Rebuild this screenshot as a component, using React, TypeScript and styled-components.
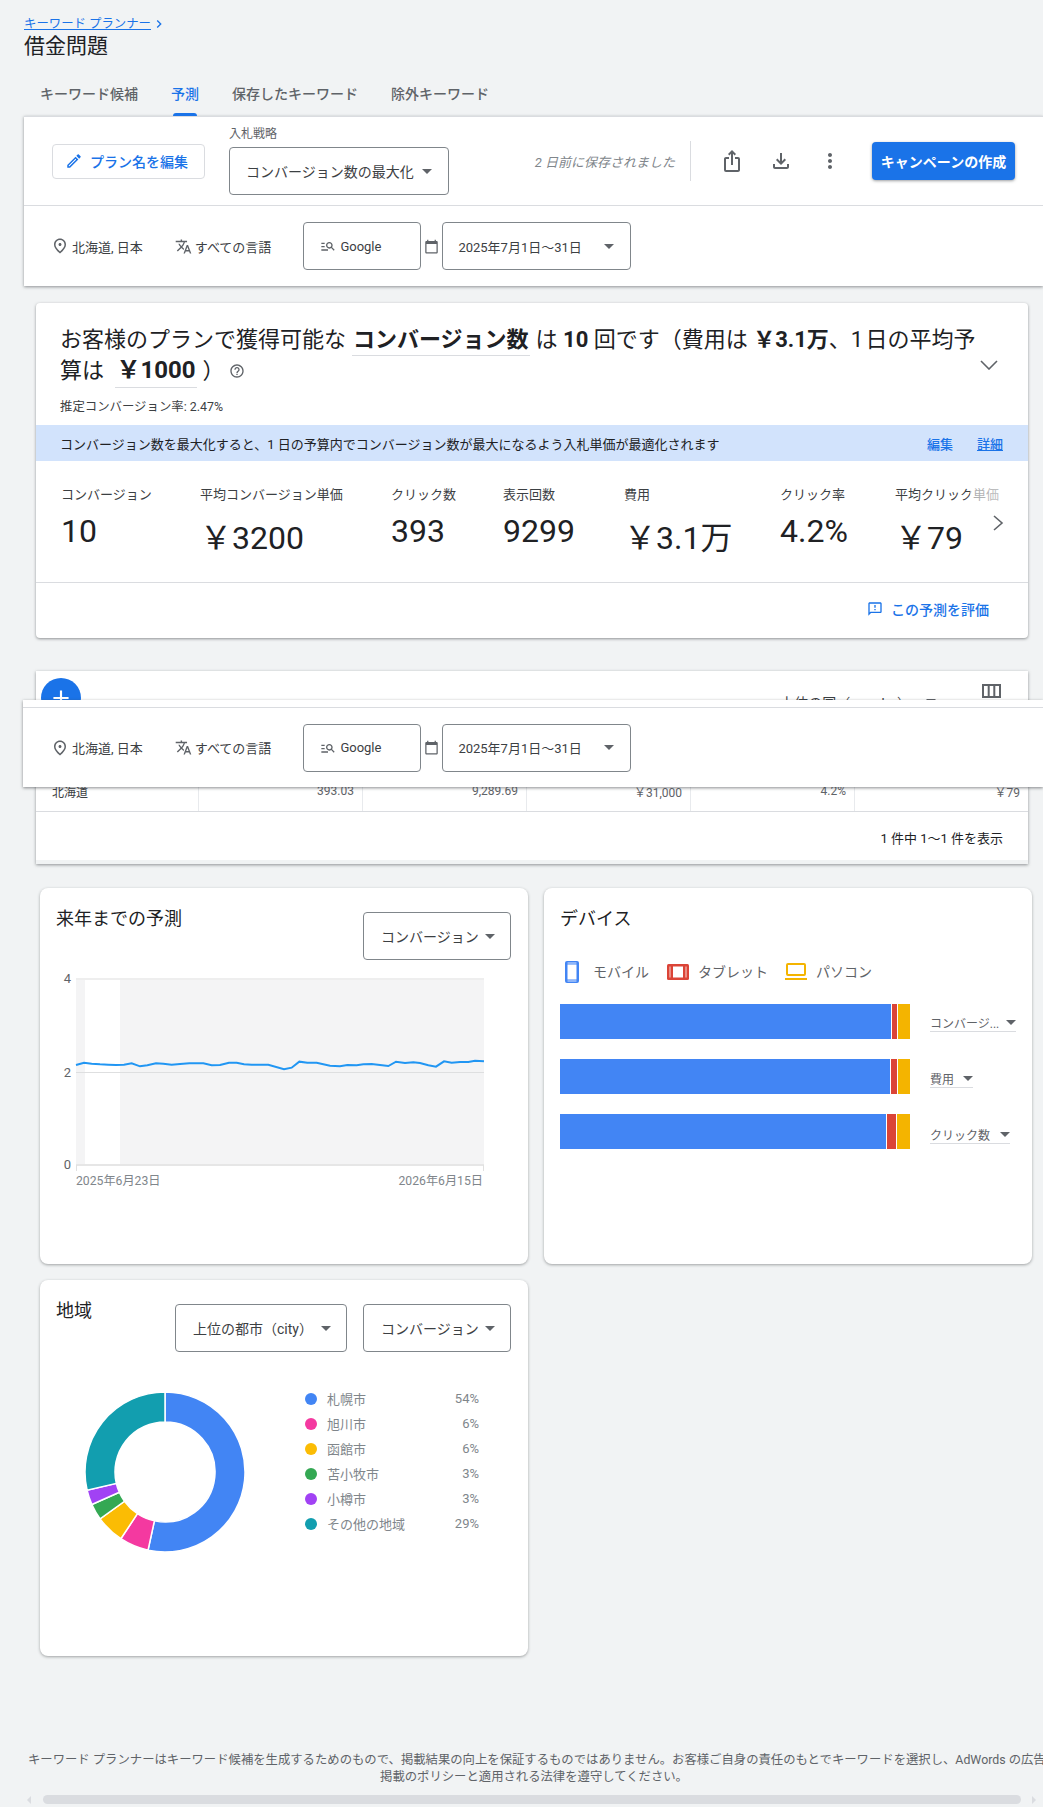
import * as React from 'react';
import styled, { createGlobalStyle } from 'styled-components';
import {
  MdAdd,
  MdCalendarToday,
  MdChevronRight,
  MdHelpOutline,
  MdIosShare,
  MdManageSearch,
  MdMoreVert,
  MdOutlineEdit,
  MdOutlineFeedback,
  MdOutlineFileDownload,
  MdOutlinePlace,
  MdTranslate,
} from 'react-icons/md';

const GlobalStyle = createGlobalStyle`
  html, body {
    margin: 0;
    padding: 0;
    background: #f1f3f4;
    overflow: hidden;
  }
  body, button {
    font-family: Roboto, 'Noto Sans CJK JP', sans-serif;
    color: #202124;
  }
`;

const Page = styled.div`
  position: relative;
  width: 1043px;
  height: 1807px;
  overflow: hidden;
  padding: 17px 0 0 24px;
  box-sizing: border-box;
  background: #f1f3f4;
`;

const Breadcrumb = styled.a`
  display: flex;
  align-items: center;
  width: fit-content;
  height: 14px;
  font-size: 12.4px;
  line-height: 14px;
  color: #1a73e8;
  span {
    text-decoration: underline;
  }
`;
const Title = styled.h1`
  margin: 1px 0 7px;
  font-size: 21px;
  font-weight: 400;
  line-height: 28px;
`;

const Tabs = styled.div`
  display: flex;
  height: 49px;
`;
const Tab = styled.div<{ $active?: boolean }>`
  position: relative;
  padding: 19px 16px 0;
  margin-right: 1px;
  font-size: 14px;
  line-height: 17px;
  font-weight: 500;
  color: ${(p) => (p.$active ? '#1a73e8' : '#5f6368')};
  ${(p) =>
    p.$active &&
    `&::after {
      content: '';
      position: absolute;
      left: 18px;
      right: 18px;
      bottom: 0;
      height: 3px;
      border-radius: 3px 3px 0 0;
      background: #1a73e8;
    }`}
`;

const Panel = styled.section`
  width: 1019px;
  background: #fff;
  border-top: 1px solid #dadce0;
  box-shadow: 0 1px 3px rgba(60, 64, 67, 0.55);
`;
const PlanRow = styled.div`
  display: flex;
  align-items: center;
  height: 88px;
  padding: 0 28px 0 28px;
  border-bottom: 1px solid #dadce0;
`;
const EditButton = styled.button`
  display: flex;
  align-items: center;
  gap: 7px;
  width: 153px;
  height: 35px;
  margin-right: 24px;
  padding: 0 0 0 12px;
  background: #fff;
  border: 1px solid #dadce0;
  border-radius: 4px;
  font-size: 14px;
  font-weight: 500;
  color: #1a73e8;
`;
const FieldGroup = styled.div`
  display: flex;
  flex-direction: column;
`;
const FieldLabel = styled.label`
  height: 20px;
  font-size: 12px;
  line-height: 14px;
  color: #5f6368;
`;
const Select = styled.div<{ $width: number; $pad?: number; $caretGap?: number }>`
  display: flex;
  align-items: center;
  justify-content: space-between;
  flex: none;
  width: ${(p) => p.$width}px;
  height: 48px;
  padding: 0 ${(p) => p.$caretGap ?? 16}px 0 ${(p) => p.$pad ?? 16}px;
  box-sizing: border-box;
  border: 1px solid #80868b;
  border-radius: 4px;
  background: #fff;
  font-size: 14px;
  color: #3c4043;
  white-space: nowrap;
`;
const Caret = styled.i`
  display: block;
  flex: none;
  width: 0;
  height: 0;
  border-left: 5px solid transparent;
  border-right: 5px solid transparent;
  border-top: 5px solid #5f6368;
`;
const SavedNote = styled.span`
  margin-left: auto;
  font-size: 13px;
  font-style: italic;
  color: #80868b;
`;
const Divider = styled.div`
  width: 1px;
  height: 40px;
  margin: 0 16px 0 15px;
  background: #dadce0;
`;
const IconButton = styled.div`
  display: flex;
  align-items: center;
  justify-content: center;
  width: 49px;
  height: 40px;
  color: #5f6368;
`;
const PrimaryButton = styled.button`
  width: 143px;
  height: 38px;
  margin-left: 18px;
  padding: 0;
  border: 0;
  border-radius: 4px;
  background: #1a73e8;
  color: #fff;
  font-size: 14px;
  font-weight: 700;
  box-shadow: 0 1px 3px rgba(60, 64, 67, 0.5);
`;

const FilterRow = styled.div`
  display: flex;
  align-items: center;
  height: 80px;
  padding-left: 27px;
  box-sizing: border-box;
  background: #fff;
`;
const FilterItem = styled.div<{ $gap: number }>`
  display: flex;
  align-items: center;
  gap: 3px;
  margin-right: ${(p) => p.$gap}px;
  font-size: 13px;
  color: #3c4043;
  svg {
    color: #5f6368;
  }
`;
const NetworkBox = styled(Select)`
  justify-content: flex-start;
  gap: 4px;
  font-size: 13px;
  svg {
    color: #5f6368;
  }
`;
const DateText = styled.span`
  font-size: 13px;
`;
const CalendarSlot = styled.div`
  display: flex;
  justify-content: center;
  width: 21px;
  color: #5f6368;
`;
const FloatingFilter = styled.div`
  position: absolute;
  top: 29px;
  left: -13px;
  width: 1020px;
  padding-top: 7px;
  background: #fff;
  box-shadow: 0 1px 3px rgba(60, 64, 67, 0.6);
  ${FilterRow} {
    padding-left: 28px;
    border-top: 1px solid #dadce0;
  }
`;

const Summary = styled.section`
  position: relative;
  width: 992px;
  margin: 17px 0 0 12px;
  background: #fff;
  border-radius: 4px;
  box-shadow: 0 1px 3px rgba(60, 64, 67, 0.55);
`;
const Headline = styled.h2`
  width: 930px;
  height: 62px;
  margin: 0;
  padding: 21px 0 0 24px;
  box-sizing: content-box;
  font-size: 22px;
  line-height: 31px;
  font-weight: 400;
`;
const Emphasis = styled.b<{ $large?: boolean }>`
  padding: 0 1px 3px;
  margin: 0 6px;
  border-bottom: 1px solid #dadce0;
  font-size: ${(p) => (p.$large ? 24 : 22)}px;
  font-weight: 700;
`;
const Strong = styled.b`
  font-weight: 700;
`;
const HelpIcon = styled(MdHelpOutline)`
  margin-left: 4px;
  font-size: 16px;
  color: #5f6368;
  vertical-align: -1px;
`;
const CollapseIcon = styled.svg`
  position: absolute;
  top: 57px;
  right: 30px;
  fill: none;
  stroke: #5f6368;
  stroke-width: 1.6;
`;
const RateNote = styled.p`
  margin: 0;
  padding: 12px 0 10px 24px;
  font-size: 12.4px;
  line-height: 17px;
  color: #3c4043;
`;
const InfoBand = styled.div`
  display: flex;
  align-items: center;
  height: 36px;
  padding: 0 25px 0 24px;
  background: #d2e3fc;
  font-size: 13px;
  color: #202124;
`;
const InfoText = styled.span`
  flex: 1;
`;
const InfoLink = styled.a<{ $underline?: boolean }>`
  margin-left: 24px;
  font-weight: 500;
  color: #1a73e8;
  text-decoration: ${(p) => (p.$underline ? 'underline' : 'none')};
`;
const Metrics = styled.div`
  position: relative;
  display: grid;
  grid-template-columns: 139px 191px 112px 121px 156px 115px 1fr;
  height: 122px;
  padding: 26px 0 0 25px;
  box-sizing: border-box;
  overflow: hidden;
  border-bottom: 1px solid #dadce0;
  white-space: nowrap;
`;
const Metric = styled.div`
  font-size: 13px;
  line-height: 16px;
  color: #3c4043;
`;
const MetricValue = styled.div<{ $money?: boolean }>`
  margin-top: ${(p) => (p.$money ? 16 : 9)}px;
  font-size: 32px;
  line-height: 38px;
  color: #202124;
`;
const MetricFade = styled.div`
  position: absolute;
  top: 0;
  right: 0;
  bottom: 0;
  width: 58px;
  background: linear-gradient(to right, rgba(255, 255, 255, 0.55), rgba(255, 255, 255, 0.8));
`;
const MetricNext = styled.svg`
  position: absolute;
  top: 54px;
  right: 24px;
  fill: none;
  stroke: #5f6368;
  stroke-width: 1.6;
`;
const RateLink = styled.a`
  display: flex;
  align-items: center;
  justify-content: flex-end;
  gap: 8px;
  height: 55px;
  padding: 0 39px 3px 0;
  box-sizing: border-box;
  font-size: 14px;
  font-weight: 500;
  color: #1a73e8;
`;

const TableWrap = styled.section`
  position: relative;
  width: 992px;
  margin: 33px 0 0 12px;
  background: #fff;
  box-shadow: 0 1px 3px rgba(60, 64, 67, 0.55);
`;
const TableTools = styled.div`
  display: flex;
  height: 100px;
  padding: 7px 27px 0 5px;
  box-sizing: border-box;
`;
const Fab = styled.div`
  display: flex;
  align-items: center;
  justify-content: center;
  width: 40px;
  height: 40px;
  border-radius: 50%;
  background: #1a73e8;
  color: #fff;
  font-size: 26px;
`;
const TopCountry = styled.div`
  display: flex;
  align-items: center;
  gap: 15px;
  height: 17px;
  margin: 15px 46px 0 auto;
  font-size: 14px;
  color: #3c4043;
`;
const ColumnsIcon = styled.svg`
  margin-top: 6px;
  fill: none;
  stroke: #5f6368;
  stroke-width: 2;
`;
const TableRow = styled.div`
  display: grid;
  grid-template-columns: 163px repeat(4, 164px) 1fr;
  height: 40px;
  border-bottom: 1px solid #dadce0;
`;
const Cell = styled.div<{ $name?: boolean }>`
  display: flex;
  align-items: center;
  justify-content: ${(p) => (p.$name ? 'flex-start' : 'flex-end')};
  padding: 0 ${(p) => (p.$name ? 0 : 8)}px 0 ${(p) => (p.$name ? 16 : 0)}px;
  font-size: 12px;
  color: ${(p) => (p.$name ? '#3c4043' : '#5f6368')};
  border-right: 1px solid #e8eaed;
  &:last-child {
    border-right: 0;
  }
`;
const TableFooter = styled.div`
  height: 48px;
  padding: 18px 25px 0 0;
  box-sizing: border-box;
  font-size: 13px;
  line-height: 17px;
  text-align: right;
  color: #202124;
`;
const TableEnd = styled.div`
  height: 4px;
  background: #f1f3f4;
`;

const CardGrid = styled.div`
  display: grid;
  grid-template-columns: 488px 488px;
  grid-auto-rows: 376px;
  gap: 16px;
  margin: 24px 0 0 16px;
`;
const Card = styled.section`
  padding: 18px 17px 0 16px;
  box-sizing: border-box;
  background: #fff;
  border-radius: 8px;
  box-shadow: 0 1px 3px rgba(60, 64, 67, 0.45);
`;
const CardHead = styled.div`
  display: flex;
  align-items: flex-start;
  gap: 16px;
  height: 64px;
`;
const CardTitle = styled.h3`
  flex: 1;
  margin: 0;
  font-size: 18px;
  line-height: 26px;
  font-weight: 400;
`;
const CardSelect = styled(Select)`
  margin-top: 6px;
`;

const ChartSvg = styled.svg`
  display: block;
  text {
    font-family: Roboto, 'Noto Sans CJK JP', sans-serif;
    font-size: 12.2px;
  }
  .axis {
    font-size: 13px;
    fill: #5f6368;
  }
  .date {
    fill: #80868b;
  }
`;

const DeviceLegend = styled.div`
  display: flex;
  align-items: center;
  height: 20px;
  margin-top: -9px;
  font-size: 14px;
  color: #5f6368;
`;
const LegendEntry = styled.div<{ $gap: number }>`
  display: flex;
  align-items: center;
  margin-right: ${(p) => p.$gap}px;
`;
const LegendIcon = styled.span<{ $left: number; $right: number }>`
  display: flex;
  margin: 1px ${(p) => p.$right}px 0 ${(p) => p.$left}px;
`;
const DeviceRows = styled.div`
  display: flex;
  flex-direction: column;
  gap: 20px;
  margin-top: 23px;
`;
const DeviceRow = styled.div`
  display: flex;
  align-items: flex-end;
  height: 35px;
`;
const Bar = styled.div`
  display: flex;
  gap: 1px;
  flex: none;
  width: 350px;
  height: 35px;
`;
const BarPart = styled.div<{ $color: string }>`
  background: ${(p) => p.$color};
`;
const RowSelect = styled.div<{ $width: number; $lift: number }>`
  display: flex;
  align-items: center;
  justify-content: space-between;
  gap: 7px;
  width: ${(p) => p.$width}px;
  height: 18px;
  margin: 0 0 ${(p) => p.$lift}px 20px;
  border-bottom: 1px solid #dadce0;
  font-size: 12px;
  color: #5f6368;
  white-space: nowrap;
`;
const GeoBody = styled.div`
  display: flex;
  align-items: flex-start;
  margin-top: 30px;
`;
const DonutSvg = styled.svg`
  flex: none;
  margin-left: 29px;
`;
const GeoLegend = styled.ul`
  flex: none;
  width: 174px;
  margin: -6px 0 0 60px;
  padding: 0;
  list-style: none;
`;
const GeoItem = styled.li`
  display: flex;
  align-items: center;
  height: 25px;
  font-size: 13px;
  color: #80868b;
`;
const GeoDot = styled.i<{ $color: string }>`
  flex: none;
  width: 12px;
  height: 12px;
  margin-right: 10px;
  border-radius: 50%;
  background: ${(p) => p.$color};
`;
const GeoShare = styled.span`
  margin-left: auto;
`;

const Disclaimer = styled.p`
  position: absolute;
  left: 28px;
  top: 1752px;
  width: 1012px;
  margin: 0;
  font-size: 12.35px;
  line-height: 17px;
  text-align: center;
  white-space: nowrap;
  color: #5f6368;
`;
const ScrollTrack = styled.div`
  position: absolute;
  left: 27px;
  right: 7px;
  bottom: 3px;
  display: flex;
  align-items: center;
  justify-content: space-between;
  height: 9px;
`;
const ScrollThumb = styled.div`
  width: 978px;
  height: 9px;
  border-radius: 5px;
  background: #dadce0;
`;
const ScrollArrow = styled.i<{ $right?: boolean }>`
  width: 0;
  height: 0;
  border-top: 4px solid transparent;
  border-bottom: 4px solid transparent;
  ${(p) => (p.$right ? 'border-left: 4px solid #dadce0;' : 'border-right: 4px solid #dadce0;')}
`;

const BLUE = '#4285f4';
const RED = '#db4437';
const YELLOW = '#f4b400';

const FilterContent: React.FC = () => (
  <FilterRow>
    <FilterItem $gap={32}>
      <MdOutlinePlace size={18} />
      北海道, 日本
    </FilterItem>
    <FilterItem $gap={32}>
      <MdTranslate size={17} />
      すべての言語
    </FilterItem>
    <NetworkBox $width={118} $pad={16}>
      <MdManageSearch size={16} />
      Google
    </NetworkBox>
    <CalendarSlot>
      <MdCalendarToday size={15} />
    </CalendarSlot>
    <Select $width={189} $pad={15} $caretGap={16}>
      <DateText>2025年7月1日～31日</DateText>
      <Caret />
    </Select>
  </FilterRow>
);

const metrics = [
  { label: 'コンバージョン', value: '10' },
  { label: '平均コンバージョン単価', value: '￥3200', money: true },
  { label: 'クリック数', value: '393' },
  { label: '表示回数', value: '9299' },
  { label: '費用', value: '￥3.1万', money: true },
  { label: 'クリック率', value: '4.2%' },
  { label: '平均クリック単価', value: '￥79', money: true },
];

const tableCells = ['393.03', '9,289.69', '￥31,000', '4.2%', '￥79'];

const linePoints = [
  [138, 555], [162, 548], [185, 551], [210, 553], [235, 554], [258, 555], [282, 554], [305, 550],
  [330, 559], [352, 556], [378, 550], [400, 551], [425, 554], [450, 552], [478, 550], [520, 550],
  [545, 556], [570, 555], [597, 548], [620, 548], [642, 553], [665, 554], [715, 554], [762, 568],
  [785, 563], [808, 545], [832, 548], [860, 548], [900, 557], [930, 559], [952, 555], [980, 556],
  [1000, 553], [1025, 552], [1050, 555], [1075, 558], [1098, 545], [1125, 549], [1150, 547], [1170, 549],
  [1195, 556], [1218, 560], [1242, 544], [1265, 548], [1290, 546], [1315, 546], [1335, 542], [1362, 544],
];

const ForecastChart: React.FC = () => (
  <ChartSvg width="450" height="230" viewBox="0 0 450 230">
    <rect x="20" y="9" width="408" height="186" fill="#f4f4f5" />
    <rect x="29" y="9" width="35" height="186" fill="#fff" />
    <rect x="20" y="8" width="408" height="2" fill="#eeeeee" />
    <rect x="20" y="102" width="408" height="1" fill="#dedfe0" />
    <rect x="20" y="194" width="408" height="2" fill="#e6e6e6" />
    <rect x="20" y="195" width="1" height="6" fill="#e0e0e0" />
    <rect x="427" y="195" width="1" height="6" fill="#e0e0e0" />
    <polyline
      fill="none"
      stroke="#2196f3"
      strokeWidth="2"
      points={linePoints.map(([x, y]) => `${x / 3 - 26},${y / 3 - 90}`).join(' ')}
    />
    <text className="axis" x="15" y="13" textAnchor="end">4</text>
    <text className="axis" x="15" y="107" textAnchor="end">2</text>
    <text className="axis" x="15" y="199" textAnchor="end">0</text>
    <text className="date" x="20" y="215">2025年6月23日</text>
    <text className="date" x="427" y="215" textAnchor="end">2026年6月15日</text>
  </ChartSvg>
);

const PhoneIcon = () => (
  <svg width="14" height="22" viewBox="0 0 14 22">
    <rect width="14" height="22" rx="2" fill={BLUE} />
    <rect x="2.5" y="3.5" width="9" height="15" fill="#fff" />
    <rect x="2.5" y="1.5" width="9" height="1" fill="#dbe7fd" />
    <rect x="2.5" y="19.5" width="9" height="1" fill="#dbe7fd" />
  </svg>
);
const TabletIcon = () => (
  <svg width="22" height="16" viewBox="0 0 22 16">
    <rect width="22" height="16" rx="1.5" fill={RED} />
    <rect x="6" y="2.5" width="10" height="11" fill="#fff" />
    <rect x="2.5" y="2.5" width="1" height="11" fill="#f8d8d4" />
    <rect x="18.5" y="2.5" width="1" height="11" fill="#f8d8d4" />
  </svg>
);
const LaptopIcon = () => (
  <svg width="22" height="17" viewBox="0 0 22 17">
    <rect x="2" y="1" width="18" height="11" rx="1" fill="none" stroke={YELLOW} strokeWidth="2" />
    <rect x="0" y="15" width="22" height="2" fill={YELLOW} />
  </svg>
);

const deviceRows = [
  { name: 'コンバージ...', width: 90, lift: 7, parts: [331, 5, 12] },
  { name: '費用', width: 43, lift: 6, parts: [330, 6, 12] },
  { name: 'クリック数', width: 80, lift: 5, parts: [326, 9, 13] },
];
const partColors = [BLUE, RED, YELLOW];

// arc is the drawn size of the slice, share the rounded figure in the legend
const geo = [
  { name: '札幌市', share: 54, arc: 53.4, color: '#4285f4' },
  { name: '旭川市', share: 6, arc: 5.9, color: '#f439a0' },
  { name: '函館市', share: 6, arc: 5.75, color: '#fbbc04' },
  { name: '苫小牧市', share: 3, arc: 3.3, color: '#34a853' },
  { name: '小樽市', share: 3, arc: 3, color: '#a142f4' },
  { name: 'その他の地域', share: 29, arc: 28.65, color: '#129eaf' },
];

// donut slices, clockwise from 12 o'clock
const slicePath = (from: number, to: number) => {
  const pt = (pct: number, r: number) => {
    const a = (pct / 100) * 2 * Math.PI;
    return `${(80 + r * Math.sin(a)).toFixed(2)} ${(80 - r * Math.cos(a)).toFixed(2)}`;
  };
  const large = to - from > 50 ? 1 : 0;
  return `M${pt(from, 80)}A80 80 0 ${large} 1 ${pt(to, 80)}L${pt(to, 50)}A50 50 0 ${large} 0 ${pt(from, 50)}Z`;
};

const GeoDonut: React.FC = () => {
  let start = 0;
  return (
    <DonutSvg width="160" height="160" viewBox="0 0 160 160">
      {geo.map((g) => {
        const from = start;
        start += g.arc;
        return (
          <path key={g.name} d={slicePath(from, start)} fill={g.color} stroke="#fff" strokeWidth="1.5" />
        );
      })}
    </DonutSvg>
  );
};

const App: React.FC = () => (
  <Page>
    <GlobalStyle />
    <Breadcrumb>
      <span>キーワード プランナー</span>
      <MdChevronRight size={16} />
    </Breadcrumb>
    <Title>借金問題</Title>
    <Tabs>
      <Tab>キーワード候補</Tab>
      <Tab $active>予測</Tab>
      <Tab>保存したキーワード</Tab>
      <Tab>除外キーワード</Tab>
    </Tabs>

    <Panel>
      <PlanRow>
        <EditButton>
          <MdOutlineEdit size={18} />
          プラン名を編集
        </EditButton>
        <FieldGroup>
          <FieldLabel>入札戦略</FieldLabel>
          <Select $width={220}>
            コンバージョン数の最大化
            <Caret />
          </Select>
        </FieldGroup>
        <SavedNote>2 日前に保存されました</SavedNote>
        <Divider />
        <IconButton>
          <MdIosShare size={24} />
        </IconButton>
        <IconButton>
          <MdOutlineFileDownload size={24} />
        </IconButton>
        <IconButton>
          <MdMoreVert size={24} />
        </IconButton>
        <PrimaryButton>キャンペーンの作成</PrimaryButton>
      </PlanRow>
      <FilterContent />
    </Panel>

    <Summary>
      <Headline>
        お客様のプランで獲得可能な<Emphasis>コンバージョン数</Emphasis>は <Strong>10</Strong> 回です（費用は <Strong>￥3.1万</Strong>、1&#8202;日の平均予算は{' '}
        <Emphasis $large>￥1000</Emphasis>）
        <HelpIcon />
      </Headline>
      <CollapseIcon width="18" height="10" viewBox="0 0 18 10">
        <polyline points="1,1 9,9 17,1" />
      </CollapseIcon>
      <RateNote>推定コンバージョン率: 2.47%</RateNote>
      <InfoBand>
        <InfoText>コンバージョン数を最大化すると、1 日の予算内でコンバージョン数が最大になるよう入札単価が最適化されます</InfoText>
        <InfoLink>編集</InfoLink>
        <InfoLink $underline>詳細</InfoLink>
      </InfoBand>
      <Metrics>
        {metrics.map((m) => (
          <Metric key={m.label}>
            {m.label}
            <MetricValue $money={m.money}>{m.value}</MetricValue>
          </Metric>
        ))}
        <MetricFade />
        <MetricNext width="11" height="16" viewBox="0 0 11 16">
          <polyline points="1,1 9,8 1,15" />
        </MetricNext>
      </Metrics>
      <RateLink>
        <MdOutlineFeedback size={16} />
        この予測を評価
      </RateLink>
    </Summary>

    <TableWrap>
      <TableTools>
        <Fab>
          <MdAdd />
        </Fab>
        <TopCountry>
          上位の国（country）
          <Caret />
        </TopCountry>
        <ColumnsIcon width="19" height="14" viewBox="0 0 19 14">
          <rect x="1" y="1" width="17" height="12" />
          <path d="M6.7 1v12M12.3 1v12" />
        </ColumnsIcon>
      </TableTools>
      <TableRow>
        <Cell $name>北海道</Cell>
        {tableCells.map((c) => (
          <Cell key={c}>{c}</Cell>
        ))}
      </TableRow>
      <TableFooter>1 件中 1～1 件を表示</TableFooter>
      <TableEnd />
      <FloatingFilter>
        <FilterContent />
      </FloatingFilter>
    </TableWrap>

    <CardGrid>
      <Card>
        <CardHead>
          <CardTitle>来年までの予測</CardTitle>
          <CardSelect $width={148} $caretGap={15} $pad={17}>
            コンバージョン
            <Caret />
          </CardSelect>
        </CardHead>
        <ForecastChart />
      </Card>
      <Card>
        <CardHead>
          <CardTitle>デバイス</CardTitle>
        </CardHead>
        <DeviceLegend>
          <LegendEntry $gap={18}>
            <LegendIcon $left={5} $right={14}>
              <PhoneIcon />
            </LegendIcon>
            モバイル
          </LegendEntry>
          <LegendEntry $gap={17}>
            <LegendIcon $left={0} $right={9}>
              <TabletIcon />
            </LegendIcon>
            タブレット
          </LegendEntry>
          <LegendEntry $gap={0}>
            <LegendIcon $left={0} $right={9}>
              <LaptopIcon />
            </LegendIcon>
            パソコン
          </LegendEntry>
        </DeviceLegend>
        <DeviceRows>
          {deviceRows.map((row) => (
            <DeviceRow key={row.name}>
              <Bar>
                {row.parts.map((w, i) => (
                  <BarPart key={i} $color={partColors[i]} style={{ width: w }} />
                ))}
              </Bar>
              <RowSelect $width={row.width} $lift={row.lift}>
                {row.name}
                <Caret />
              </RowSelect>
            </DeviceRow>
          ))}
        </DeviceRows>
      </Card>
      <Card>
        <CardHead>
          <CardTitle>地域</CardTitle>
          <CardSelect $width={172} $caretGap={15} $pad={17}>
            上位の都市（city）
            <Caret />
          </CardSelect>
          <CardSelect $width={148} $caretGap={15} $pad={17}>
            コンバージョン
            <Caret />
          </CardSelect>
        </CardHead>
        <GeoBody>
          <GeoDonut />
          <GeoLegend>
            {geo.map((g) => (
              <GeoItem key={g.name}>
                <GeoDot $color={g.color} />
                {g.name}
                <GeoShare>{g.share}%</GeoShare>
              </GeoItem>
            ))}
          </GeoLegend>
        </GeoBody>
      </Card>
    </CardGrid>

    <Disclaimer>
      キーワード プランナーはキーワード候補を生成するためのもので、掲載結果の向上を保証するものではありません。お客様ご自身の責任のもとでキーワードを選択し、AdWords の広告
      <br />
      掲載のポリシーと適用される法律を遵守してください。
    </Disclaimer>
    <ScrollTrack>
      <ScrollArrow />
      <ScrollThumb />
      <ScrollArrow $right />
    </ScrollTrack>
  </Page>
);

export default App;
